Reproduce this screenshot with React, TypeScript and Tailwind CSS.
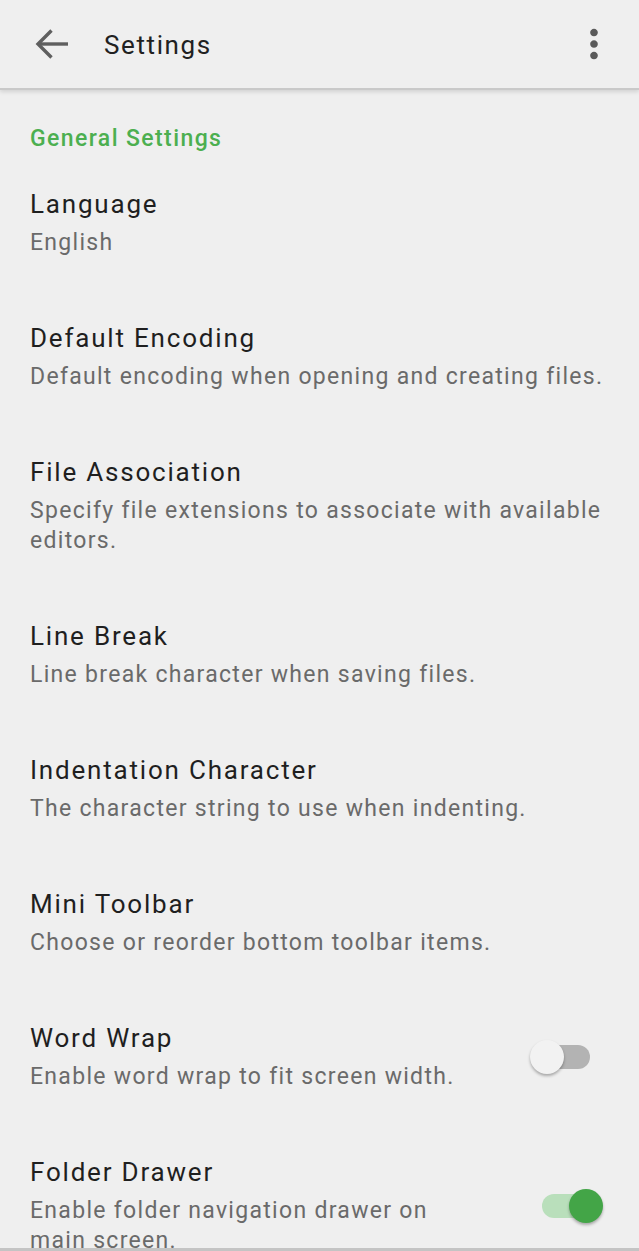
import React from "react";

type Row = { title: string; sub: string; toggle?: "on" | "off" };

const rows: Row[] = [
  { title: "Language", sub: "English" },
  { title: "Default Encoding", sub: "Default encoding when opening and creating files." },
  { title: "File Association", sub: "Specify file extensions to associate with available editors." },
  { title: "Line Break", sub: "Line break character when saving files." },
  { title: "Indentation Character", sub: "The character string to use when indenting." },
  { title: "Mini Toolbar", sub: "Choose or reorder bottom toolbar items." },
  { title: "Word Wrap", sub: "Enable word wrap to fit screen width.", toggle: "off" },
  { title: "Folder Drawer", sub: "Enable folder navigation drawer on main screen.", toggle: "on" },
];

function Toggle({ on }: { on: boolean }) {
  return (
    <div className="relative w-[74px] h-[36px] shrink-0 flex items-center">
      <div
        className={
          on
            ? "absolute left-[12px] right-[8px] h-[24px] rounded-full bg-[#b9dfbb]"
            : "absolute left-[8px] right-[14px] h-[24px] rounded-full bg-[#b3b3b3]"
        }
      />
      <div
        className={
          on
            ? "absolute right-[1px] w-[34px] h-[34px] rounded-full bg-[#43a547] shadow-[0_2px_3px_rgba(0,0,0,0.3)]"
            : "absolute left-[0px] w-[34px] h-[34px] rounded-full bg-[#f2f2f2] shadow-[0_2px_3px_rgba(0,0,0,0.3)]"
        }
      />
    </div>
  );
}

export default function App() {
  return (
    <div
      className="w-[639px] h-[1251px] overflow-hidden bg-[#efefef] flex flex-col relative"
      style={{ fontFamily: "Roboto, 'Noto Sans', sans-serif" }}
    >
      <header className="h-[90px] shrink-0 flex items-center bg-[#efefef] border-b-2 border-[#c9c9c9] shadow-[0_2px_4px_rgba(0,0,0,0.12)] relative z-10">
        <div className="w-[104px] flex items-center pl-[35px]">
          <svg width="34" height="32" viewBox="0 0 34 32" fill="none" stroke="#5f5f5f" strokeWidth="3.4" strokeLinecap="butt">
            <path d="M33 16H3" />
            <path d="M16.5 2.5L3 16l13.5 13.5" />
          </svg>
        </div>
        <div className="flex-1 text-[26px] leading-[34px] tracking-[1.6px] text-[#212121] mt-[1px]">Settings</div>
        <div className="pr-[22px] flex items-center">
          <svg width="46" height="46" viewBox="0 0 24 24" fill="#5a5a5a">
            <path d="M12 8c1.1 0 2-.9 2-2s-.9-2-2-2-2 .9-2 2 .9 2 2 2zm0 2c-1.1 0-2 .9-2 2s.9 2 2 2 2-.9 2-2-.9-2-2-2zm0 6c-1.1 0-2 .9-2 2s.9 2 2 2 2-.9 2-2-.9-2-2-2z" />
          </svg>
        </div>
      </header>
      <div className="flex flex-col">
        <div className="pt-[34px] pb-[2px] pl-[30px] text-[23px] leading-[30px] tracking-[1.4px] font-medium text-[#4caf50]">
          General Settings
        </div>
        {rows.map((r) => (
          <div key={r.title} className="flex items-center pl-[30px] pr-[28px] pt-[31px] pb-[32px]">
            <div className="flex-1 flex flex-col gap-[7px] min-w-0">
              <div className="text-[26px] leading-[34px] tracking-[1.8px] text-[#1f1f1f]">{r.title}</div>
              <div className="text-[23px] leading-[30px] tracking-[1.3px] text-[#6a6a6a]">{r.sub}</div>
            </div>
            {r.toggle && (
              <div className="ml-[40px] mr-[7px]">
                <Toggle on={r.toggle === "on"} />
              </div>
            )}
          </div>
        ))}
      </div>
      <div className="absolute bottom-0 left-0 right-0 h-[3px] bg-[#c4c4c4]" />
    </div>
  );
}
